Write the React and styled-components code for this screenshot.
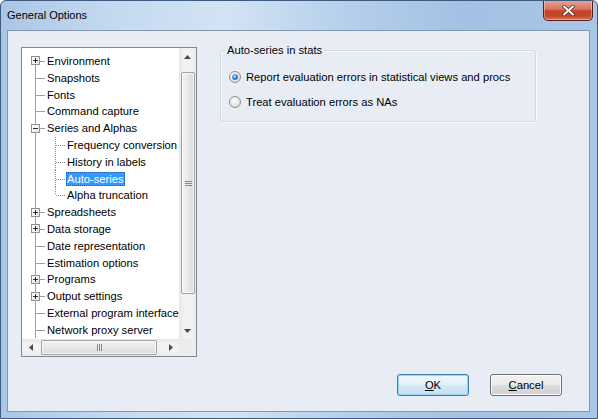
import styled, { createGlobalStyle, css } from "styled-components";

const GlobalStyle = createGlobalStyle`
  html, body { margin: 0; padding: 0; background: #ffffff; }
  body { font-family: "Liberation Sans", Arial, sans-serif; }
  * { box-sizing: border-box; }
`;

const TREE = [
  { label: "Environment", toggle: "plus" },
  { label: "Snapshots" },
  { label: "Fonts" },
  { label: "Command capture" },
  {
    label: "Series and Alphas",
    toggle: "minus",
    children: ["Frequency conversion", "History in labels", "Auto-series", "Alpha truncation"],
  },
  { label: "Spreadsheets", toggle: "plus" },
  { label: "Data storage", toggle: "plus" },
  { label: "Date representation" },
  { label: "Estimation options" },
  { label: "Programs", toggle: "plus" },
  { label: "Output settings", toggle: "plus" },
  { label: "External program interface" },
  { label: "Network proxy server" },
];

const SELECTED = "Auto-series";

export default function App() {
  const rows = [];
  TREE.forEach((item, i) => {
    rows.push({ ...item, level: 1, first: i === 0, key: item.label });
    if (item.children) {
      item.children.forEach((child, j) => {
        rows.push({
          label: child,
          level: 2,
          last: j === item.children.length - 1,
          key: child,
        });
      });
    }
  });

  return (
    <>
      <GlobalStyle />
      <Window>
        <TitleBar>
          <Title>General Options</Title>
          <CloseButton>
            <svg width="13" height="11" viewBox="0 0 13 11">
              <path d="M2 1.5 L11 9.5 M11 1.5 L2 9.5" stroke="#5a2a22" strokeWidth="3.6" strokeLinecap="round" />
              <path d="M2 1.5 L11 9.5 M11 1.5 L2 9.5" stroke="#ffffff" strokeWidth="2" strokeLinecap="round" />
            </svg>
          </CloseButton>
        </TitleBar>
        <Client>
          <Main>
            <TreeBox>
              <TreeList>
                {rows.map((row) => (
                  <TreeRow key={row.key}>
                    <Gutter $first={row.first} $pass={row.level === 2}>
                      {row.level === 1 && row.toggle && (
                        <Toggle>{row.toggle === "plus" ? <PlusSign /> : <MinusSign />}</Toggle>
                      )}
                    </Gutter>
                    {row.level === 2 && <SubGutter $last={row.last} />}
                    <Label $selected={row.label === SELECTED}>{row.label}</Label>
                  </TreeRow>
                ))}
              </TreeList>
              <VScroll>
                <ArrowButton>
                  <Arrow dir="up" />
                </ArrowButton>
                <VTrack>
                  <VThumb>
                    <svg width="7" height="5" viewBox="0 0 7 5">
                      <path d="M0 0.5 H7 M0 2.5 H7 M0 4.5 H7" stroke="#8a8a8a" strokeWidth="1" />
                    </svg>
                  </VThumb>
                </VTrack>
                <ArrowButton>
                  <Arrow dir="down" />
                </ArrowButton>
              </VScroll>
              <HScroll>
                <ArrowButton>
                  <Arrow dir="left" />
                </ArrowButton>
                <HTrack>
                  <HThumb>
                    <svg width="5" height="7" viewBox="0 0 5 7">
                      <path d="M0.5 0 V7 M2.5 0 V7 M4.5 0 V7" stroke="#8a8a8a" strokeWidth="1" />
                    </svg>
                  </HThumb>
                </HTrack>
                <ArrowButton>
                  <Arrow dir="right" />
                </ArrowButton>
              </HScroll>
              <Corner />
            </TreeBox>

            <GroupBox>
              <Legend>Auto-series in stats</Legend>
              <RadioList>
                <RadioRow>
                  <Radio $checked />
                  <span>Report evaluation errors in statistical views and procs</span>
                </RadioRow>
                <RadioRow>
                  <Radio />
                  <span>Treat evaluation errors as NAs</span>
                </RadioRow>
              </RadioList>
            </GroupBox>
          </Main>

          <Footer>
            <Button $default>
              <u>O</u>K
            </Button>
            <Button>
              <u>C</u>ancel
            </Button>
          </Footer>
        </Client>
      </Window>
    </>
  );
}

function Arrow({ dir }) {
  const paths = {
    up: "M0 4 L3.5 0 L7 4 Z",
    down: "M0 0 L3.5 4 L7 0 Z",
    left: "M4 0 L0 3.5 L4 7 Z",
    right: "M0 0 L4 3.5 L0 7 Z",
  };
  const vertical = dir === "up" || dir === "down";
  return (
    <svg width={vertical ? 7 : 4} height={vertical ? 4 : 7} viewBox={vertical ? "0 0 7 4" : "0 0 4 7"}>
      <path d={paths[dir]} fill="#4a4a4a" />
    </svg>
  );
}

function PlusSign() {
  return (
    <svg width="7" height="7" viewBox="0 0 7 7">
      <path d="M1 3.5 H6 M3.5 1 V6" stroke="#2b2b2b" strokeWidth="1" />
    </svg>
  );
}

function MinusSign() {
  return (
    <svg width="7" height="7" viewBox="0 0 7 7">
      <path d="M1 3.5 H6" stroke="#2b2b2b" strokeWidth="1" />
    </svg>
  );
}

const Window = styled.div`
  width: 598px;
  height: 419px;
  display: flex;
  flex-direction: column;
  border: 1px solid #3d5c80;
  border-radius: 6px 6px 0 0;
  overflow: hidden;
  background: linear-gradient(
    90deg,
    #aac6e6 0%,
    #c4d9f0 18%,
    #d2e3f4 38%,
    #b6cfeb 58%,
    #a2c1e4 78%,
    #a9c6e6 100%
  );
`;

const TitleBar = styled.div`
  height: 29px;
  flex: none;
  display: flex;
  align-items: flex-start;
`;

const Title = styled.div`
  line-height: 29px;
  padding-left: 6px;
  font-family: "Liberation Sans", Arial, sans-serif;
  font-size: 11px;
  color: #000;
`;

const CloseButton = styled.div`
  margin: -1px 4px 0 auto;
  width: 50px;
  height: 21px;
  display: flex;
  align-items: center;
  justify-content: center;
  border: 1px solid #5b2016;
  border-top: none;
  border-radius: 0 0 5px 5px;
  background: linear-gradient(180deg, #e7a899 0%, #d9755f 45%, #c8432b 55%, #c3452c 80%, #d6795f 100%);
  box-shadow: inset 0 0 0 1px rgba(255, 255, 255, 0.35);
`;

const Client = styled.div`
  flex: 1;
  margin: 0 7px 6px 6px;
  border: 1px solid #8397b1;
  background: #e8edf5;
  display: flex;
  flex-direction: column;
  font-size: 11.2px;
  color: #000;
`;

const Main = styled.div`
  display: flex;
  align-items: flex-start;
  padding: 16px 0 0 13px;
`;

const TreeBox = styled.div`
  width: 176px;
  height: 310px;
  border: 1px solid #828790;
  background: #ffffff;
  display: grid;
  grid-template-columns: 157px 17px;
  grid-template-rows: 291px 17px;
  overflow: hidden;
`;

const TreeList = styled.div`
  padding-top: 4.6px;
  overflow: hidden;
  white-space: nowrap;
`;

const TreeRow = styled.div`
  height: 16.8px;
  display: flex;
  align-items: center;
`;

const Gutter = styled.div`
  position: relative;
  width: 24px;
  height: 100%;
  flex: none;

  &::before {
    content: "";
    position: absolute;
    left: 13px;
    width: 1px;
    top: ${(p) => (p.$first ? "50%" : "0")};
    bottom: 0;
    background: #a0a0a0;
  }

  ${(p) =>
    !p.$pass &&
    css`
      &::after {
        content: "";
        position: absolute;
        left: 13px;
        width: 10px;
        top: 50%;
        height: 1px;
        background: #a0a0a0;
      }
    `}
`;

const Toggle = styled.div`
  position: absolute;
  z-index: 1;
  left: 9px;
  top: calc(50% - 4.5px);
  width: 9px;
  height: 9px;
  border: 1px solid #919191;
  background: linear-gradient(135deg, #ffffff 0%, #e6e6e6 100%);
  display: flex;
  align-items: center;
  justify-content: center;
`;

const SubGutter = styled.div`
  position: relative;
  width: 20px;
  height: 100%;
  flex: none;

  &::before {
    content: "";
    position: absolute;
    left: 9px;
    width: 1px;
    top: 0;
    bottom: ${(p) => (p.$last ? "50%" : "0")};
    background: repeating-linear-gradient(180deg, #8c8c8c 0 1px, transparent 1px 2px);
  }

  &::after {
    content: "";
    position: absolute;
    left: 10px;
    width: 10px;
    top: 50%;
    height: 1px;
    background: repeating-linear-gradient(90deg, #8c8c8c 0 1px, transparent 1px 2px);
  }
`;

const Label = styled.span`
  padding: 0 1px;
  line-height: 14px;
  ${(p) =>
    p.$selected &&
    css`
      background: #3399ff;
      color: #ffffff;
      outline: 1px dotted #1a5fb4;
      outline-offset: -1px;
    `}
`;

const VScroll = styled.div`
  grid-row: 1;
  grid-column: 2;
  display: flex;
  flex-direction: column;
  background: linear-gradient(90deg, #e6e6e6 0%, #f2f2f2 30%, #f2f2f2 70%, #e9e9e9 100%);
`;

const HScroll = styled.div`
  grid-row: 2;
  grid-column: 1;
  display: flex;
  background: linear-gradient(180deg, #e6e6e6 0%, #f2f2f2 30%, #f2f2f2 70%, #e9e9e9 100%);
`;

const Corner = styled.div`
  grid-row: 2;
  grid-column: 2;
  background: #ececec;
`;

const ArrowButton = styled.div`
  width: 17px;
  height: 17px;
  flex: none;
  display: flex;
  align-items: center;
  justify-content: center;
`;

const VTrack = styled.div`
  flex: 1;
  padding: 7px 1px 0 2px;
`;

const HTrack = styled.div`
  flex: 1;
  padding: 1px 0 1px 2px;
`;

const thumbBase = css`
  border: 1px solid #a0a0a0;
  border-radius: 2px;
  display: flex;
  align-items: center;
  justify-content: center;
  box-shadow: inset 0 0 0 1px #fafafa;
`;

const VThumb = styled.div`
  ${thumbBase};
  height: 222px;
  background: linear-gradient(90deg, #f3f3f3 0%, #e8e8e8 50%, #d9d9d9 100%);
`;

const HThumb = styled.div`
  ${thumbBase};
  width: 116px;
  height: 100%;
  background: linear-gradient(180deg, #f3f3f3 0%, #e8e8e8 50%, #d9d9d9 100%);
`;

const GroupBox = styled.fieldset`
  margin: -4px 0 0 23px;
  width: 316px;
  height: 79px;
  border: 1px solid #d0d9e2;
  border-radius: 3px;
  padding: 0 0 0 8px;
  box-shadow: inset 1px 1px 0 #f7f9fc, 1px 1px 0 #f7f9fc;
`;

const Legend = styled.legend`
  margin-left: -4px;
  padding: 0 2px;
  line-height: 14px;
  font-size: 11.2px;
`;

const RadioList = styled.div`
  display: flex;
  flex-direction: column;
  gap: 9px;
  margin-top: 12px;
`;

const RadioRow = styled.div`
  height: 16px;
  display: flex;
  align-items: center;
  gap: 5px;
`;

const Radio = styled.span`
  width: 12px;
  height: 12px;
  border-radius: 50%;
  border: 1px solid #8e8f8f;
  background: radial-gradient(circle at 40% 35%, #ffffff 0%, #ececec 45%, #cfcfcf 100%);
  display: flex;
  align-items: center;
  justify-content: center;

  ${(p) =>
    p.$checked &&
    css`
      &::after {
        content: "";
        width: 6px;
        height: 6px;
        border-radius: 50%;
        background: radial-gradient(circle at 40% 35%, #b5e0fb 0%, #3d8ed2 45%, #1b4f8a 100%);
      }
    `}
`;

const Footer = styled.div`
  margin-top: auto;
  display: flex;
  justify-content: flex-end;
  gap: 21px;
  padding: 0 27px 15px 0;
`;

const Button = styled.div`
  width: 72px;
  height: 22px;
  border: 1px solid #707070;
  border-radius: 3px;
  display: flex;
  align-items: center;
  justify-content: center;
  font-size: 11.2px;
  background: linear-gradient(180deg, #f2f2f2 0%, #ebebeb 48%, #dddddd 52%, #cfcfcf 100%);
  box-shadow: inset 0 0 0 1px #fcfcfc;

  u {
    text-decoration: underline;
    text-underline-offset: 1px;
  }

  ${(p) =>
    p.$default &&
    css`
      border-color: #3c7fb1;
      background: linear-gradient(180deg, #f0f7fc 0%, #e3f1fa 48%, #d3e9f7 52%, #c6e0f2 100%);
      box-shadow: inset 0 0 0 1px #9fd4f0;
    `}
`;
